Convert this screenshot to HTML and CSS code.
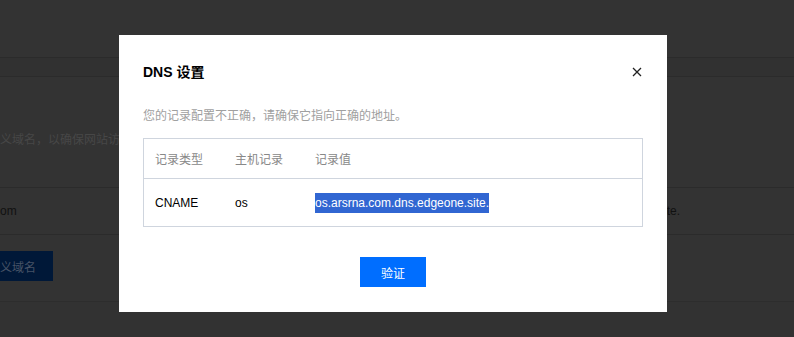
FILE: index.html
```html
<!DOCTYPE html>
<html lang="zh-CN">
<head>
    <meta charset="UTF-8">
    <meta name="viewport" content="width=device-width, initial-scale=1.0">
    <title>DNS 设置</title>
    <link rel="stylesheet" href="styles.css">
</head>
<body>
    <!-- página por trás da máscara -->
    <div class="page">
        <div class="topbar"></div>
        <div class="tabs"></div>
        <div class="content">
            <p class="hint">义域名，以确保网站访问正常。</p>
            <div class="domain-row">
                <span class="domain-left">om</span>
                <span class="domain-right">te.</span>
            </div>
            <div class="actions">
                <button class="page-btn">义域名</button>
            </div>
        </div>
        <div class="bottom-band"></div>
    </div>

    <div class="dialog">
        <div class="dialog-head">
            <h2 class="dialog-title">DNS 设置</h2>
            <button class="close-btn" aria-label="关闭">
                <svg width="10" height="10" viewBox="0 0 10 10">
                    <path d="M1 1 L9 9 M9 1 L1 9" stroke="#222" stroke-width="1.3" fill="none"/>
                </svg>
            </button>
        </div>
        <p class="dialog-desc">您的记录配置不正确，请确保它指向正确的地址。</p>
        <table class="record-table">
            <thead>
                <tr>
                    <th class="col-type">记录类型</th>
                    <th class="col-host">主机记录</th>
                    <th>记录值</th>
                </tr>
            </thead>
            <tbody>
                <tr>
                    <td>CNAME</td>
                    <td>os</td>
                    <td><span class="selected">os.arsrna.com.dns.edgeone.site.</span></td>
                </tr>
            </tbody>
        </table>
        <div class="dialog-foot">
            <button class="btn-primary">验证</button>
        </div>
    </div>
</body>
</html>
```

FILE: styles.css
```css
body {
    margin: 0;
    padding: 0;
    background-color: #333;
    font-family: "Liberation Sans", Arial, "Noto Sans CJK SC", sans-serif;
    overflow: hidden;
}
.page {
    width: 794px;
    height: 337px;
    background-color: #333;
}
.topbar {
    height: 57px;
    border-bottom: 1px solid #2b2b2b;
}
.tabs {
    height: 18px;
    background-color: #313131;
    border-bottom: 1px solid #2b2b2b;
}
.content {
    height: 224px;
    border-bottom: 1px solid #2d2d2d;
}
.hint {
    margin: 0;
    padding-top: 54px;
    font-size: 12px;
    line-height: 18px;
    color: #474747;
    white-space: nowrap;
}
.domain-row {
    margin-top: 38px;
    height: 46px;
    border-top: 1px solid #2b2b2b;
    border-bottom: 1px solid #2b2b2b;
    display: flex;
    align-items: center;
    justify-content: space-between;
    padding-right: 114px;
    font-size: 12px;
    color: #111;
}
.actions {
    padding-top: 16px;
}
.page-btn {
    width: 53px;
    height: 30px;
    border: none;
    padding: 0 22px 0 0;
    background-color: #001838;
    color: #475366;
    font-size: 12px;
    text-align: right;
    font-family: inherit;
    white-space: nowrap;
    overflow: hidden;
}
.bottom-band {
    height: 36px;
    background-color: #323232;
}

/* janela do diálogo */
.dialog {
    position: absolute;
    left: 119px;
    top: 35px;
    width: 500px;
    padding: 26px 24px 25px 24px;
    background-color: #fff;
}
.dialog-head {
    display: flex;
    justify-content: space-between;
    align-items: center;
    height: 22px;
}
.dialog-title {
    margin: 0;
    font-size: 14px;
    font-weight: bold;
    color: #000;
    line-height: 22px;
}
.close-btn {
    border: none;
    background: none;
    padding: 0;
    margin-right: 1px;
    width: 10px;
    height: 10px;
    display: flex;
}
.dialog-desc {
    margin: 24px 0 13px 0;
    font-size: 12px;
    line-height: 18px;
    color: #a0a0a0;
}
.record-table {
    width: 500px;
    border-collapse: collapse;
    border: 1px solid #cfd5de;
    font-size: 12px;
}
.record-table th,
.record-table td {
    text-align: left;
    padding: 0 0 0 11px;
    font-weight: normal;
}
.record-table th {
    height: 39px;
    color: #888;
    border-bottom: 1px solid #cfd5de;
}
.record-table td {
    height: 47px;
    color: #000;
}
.col-type,
.col-host {
    width: 69px;
}
.selected {
    background-color: #3166d2;
    color: #fff;
    padding: 3px 0;
}
.dialog-foot {
    display: flex;
    justify-content: center;
    margin-top: 30px;
}
.btn-primary {
    width: 66px;
    height: 30px;
    border: none;
    background-color: #006eff;
    color: #fff;
    font-size: 12px;
    font-family: inherit;
    cursor: pointer;
}
```
